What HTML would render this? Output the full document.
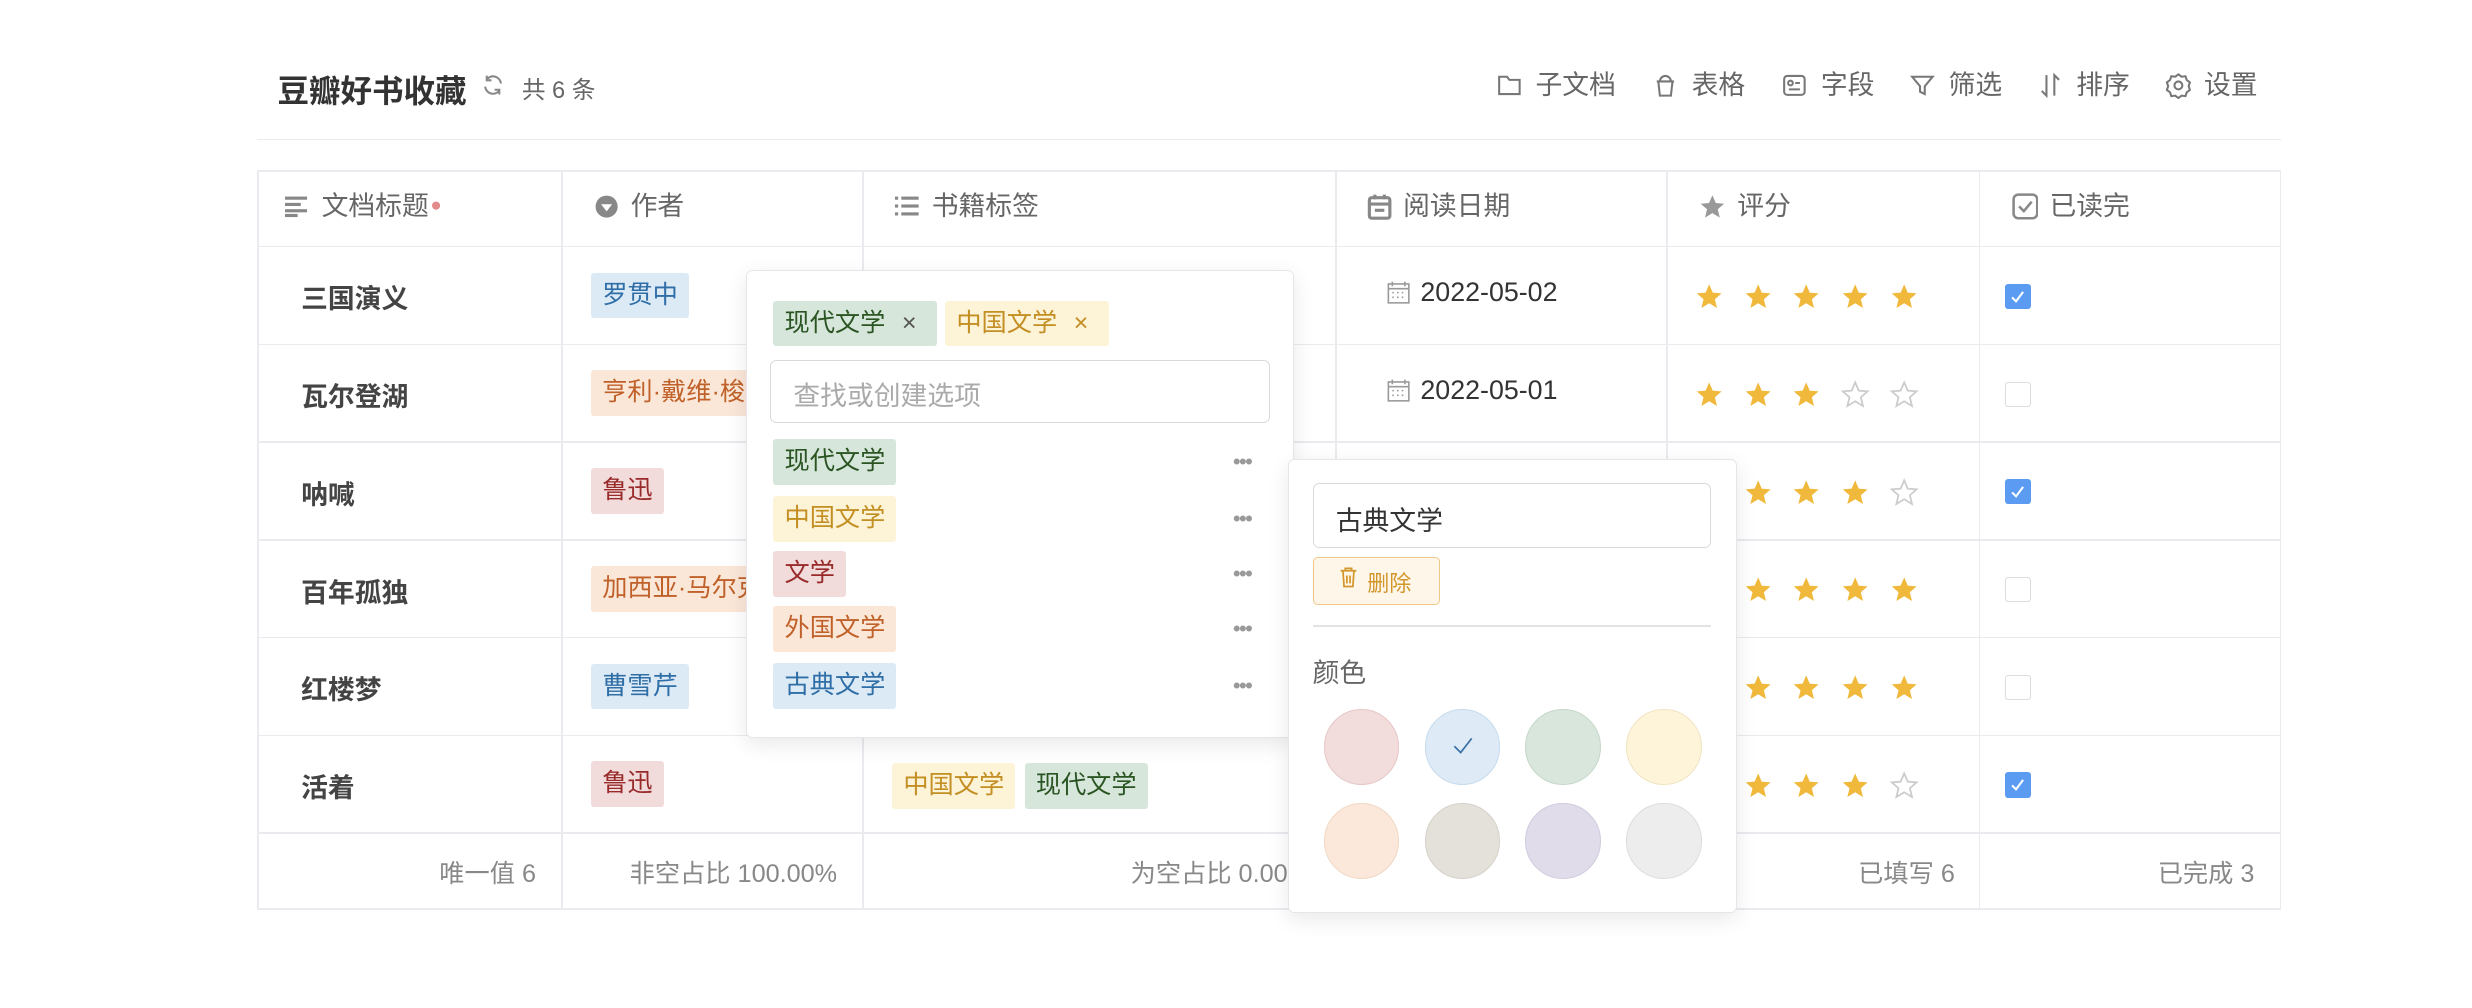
<!DOCTYPE html>
<html><head><meta charset="utf-8"><style>
*{box-sizing:border-box;margin:0;padding:0}
html,body{width:2472px;height:1008px;overflow:hidden;background:#fff}
#w{zoom:1.5765;position:relative;width:1568px;height:640px;font-family:"Liberation Sans","Noto Sans CJK SC",sans-serif;color:#333}
.a{position:absolute}
.tb{position:absolute;top:43px;font-size:17px;color:#666;display:flex;align-items:center;gap:8px;line-height:22px}
.tb svg{width:17px;height:17px}
.hl{position:absolute;left:163px;width:1284px;height:1px;background:#ebebef}
.vl{position:absolute;top:108px;height:468px;width:1px;background:#ebebef}
.hd{position:absolute;top:120px;font-size:17px;color:#666;display:flex;align-items:center;gap:7px;line-height:22px}
.t{position:absolute;font-size:17px;font-weight:bold;color:#444;left:191px}
.tag{position:absolute;height:29px;line-height:29px;padding:0 7px;font-size:16px;border-radius:2px;white-space:nowrap}
.bl{background:#dceaf6;color:#2f6ea6}.or{background:#fbe7d8;color:#c0612a}.rd{background:#f2dbdb;color:#982a2a}.gr{background:#d7e6da;color:#2a5523}.ye{background:#fdf3d7;color:#c38e22}
.dt{position:absolute;left:879px;font-size:17px;color:#333;display:flex;align-items:center;gap:6px}
.st{position:absolute;display:flex;gap:13px}
.st svg{width:18px;height:18px}
.cb{position:absolute;left:1272px;width:16px;height:16px;border-radius:2px}
.ck{background:#5b9cf2}
.uc{border:1px solid #ddd;background:#fff}
.ft{position:absolute;top:542px;font-size:16px;color:#888;text-align:right}
.pop{position:absolute;background:#fff;border:1px solid #e6e6ea;border-radius:4px;box-shadow:0 4px 14px rgba(0,0,0,.09)}
.dots{position:absolute;left:782px;font-size:14px;color:#999;letter-spacing:-1px}
.c{position:absolute;width:48px;height:48px;border-radius:50%}
</style></head><body><div id="w">
<div class="a" style="left:176px;top:42px;font-size:20px;font-weight:bold;color:#333">豆瓣好书收藏</div>
<svg class="a" style="left:306px;top:47px" width="14" height="14" viewBox="0 0 14 14" fill="none" stroke="#888" stroke-width="1.3"><path d="M12 6A5 5 0 0 0 3 3.5M2 8a5 5 0 0 0 9 2.5"/><path d="M3 1v3h3M11 13v-3H8"/></svg>
<div class="a" style="left:331px;top:45px;font-size:15px;color:#666">共 6 条</div>

<div class="tb" style="left:949px"><svg viewBox="0 0 17 17" fill="none" stroke="#777" stroke-width="1.3"><path d="M2 3h5l1.5 2H15v9H2z"/></svg>子文档</div>
<div class="tb" style="left:1048px"><svg viewBox="0 0 17 17" fill="none" stroke="#777" stroke-width="1.3"><path d="M4 6h9l-1 9H5zM3 6h11M5 6a3.5 3.5 0 0 1 7 0"/></svg>表格</div>
<div class="tb" style="left:1130px"><svg viewBox="0 0 17 17" fill="none" stroke="#777" stroke-width="1.3"><rect x="2" y="2.5" width="13" height="12" rx="2"/><circle cx="6" cy="7" r="1.5"/><path d="M5 11h7M9 7h3"/></svg>字段</div>
<div class="tb" style="left:1211px"><svg viewBox="0 0 17 17" fill="none" stroke="#777" stroke-width="1.3"><path d="M2 3h13l-5 6v5l-3-1.5V9z"/></svg>筛选</div>
<div class="tb" style="left:1292px"><svg viewBox="0 0 17 17" fill="none" stroke="#777" stroke-width="1.3"><path d="M6 2v13L3 12M11 15V2l3 3"/></svg>排序</div>
<div class="tb" style="left:1373px"><svg viewBox="0 0 17 17" fill="none" stroke="#777" stroke-width="1.3"><path d="M8.5 1.5l2 1.5 2.5-.3.8 2.4 2 1.5-.8 2.4.8 2.4-2 1.5-.8 2.4-2.5-.3-2 1.5-2-1.5-2.5.3-.8-2.4-2-1.5.8-2.4-.8-2.4 2-1.5.8-2.4 2.5.3z"/><circle cx="8.5" cy="8.5" r="2.5"/></svg>设置</div>

<div class="hl" style="top:88px"></div>
<div class="hl" style="top:108px"></div>
<div class="hl" style="top:156px"></div>
<div class="hl" style="top:218px"></div>
<div class="hl" style="top:280px"></div>
<div class="hl" style="top:342px"></div>
<div class="hl" style="top:404px"></div>
<div class="hl" style="top:466px"></div>
<div class="hl" style="top:528px"></div>
<div class="hl" style="top:576px"></div>
<div class="vl" style="left:163px"></div><div class="vl" style="left:356px"></div><div class="vl" style="left:547px"></div><div class="vl" style="left:847px"></div><div class="vl" style="left:1057px"></div><div class="vl" style="left:1255px"></div><div class="vl" style="left:1446px"></div>

<div class="hd" style="left:181px"><svg width="16" height="14" viewBox="0 0 16 14" fill="#888"><rect y="1" width="14" height="2"/><rect y="5" width="10" height="2"/><rect y="9" width="14" height="2"/><rect y="12" width="8" height="2"/></svg>文档标题<span style="color:#e38a8a;margin-left:-6px;font-size:12px">●</span></div>
<div class="hd" style="left:377px"><svg width="16" height="16" viewBox="0 0 16 16"><circle cx="8" cy="8" r="7" fill="#888"/><path d="M4.5 6.5h7L8 11z" fill="#fff"/></svg>作者</div>
<div class="hd" style="left:568px"><svg width="16" height="14" viewBox="0 0 16 14" fill="#888"><rect x="0" y="1" width="2" height="2"/><rect x="4" y="1" width="11" height="2"/><rect x="0" y="6" width="2" height="2"/><rect x="4" y="6" width="11" height="2"/><rect x="0" y="11" width="2" height="2"/><rect x="4" y="11" width="11" height="2"/></svg>书籍标签</div>
<div class="hd" style="left:867px"><svg width="16" height="17" viewBox="0 0 16 17" fill="none" stroke="#888" stroke-width="2"><rect x="1.5" y="3" width="13" height="13" rx="1.5"/><path d="M5 1v3M11 1v3M1.5 7h13M5 11h6"/></svg>阅读日期</div>
<div class="hd" style="left:1078px"><svg width="17" height="17" viewBox="0 0 24 24" fill="#999"><path d="M12 2l3 7 7.5.6-5.7 5 1.8 7.4L12 18l-6.6 4 1.8-7.4-5.7-5L9 9z"/></svg>评分</div>
<div class="hd" style="left:1276px"><svg width="17" height="17" viewBox="0 0 17 17" fill="none" stroke="#888" stroke-width="1.6"><rect x="1" y="1" width="15" height="15" rx="3"/><path d="M4.5 8.5l3 3 5-6"/></svg>已读完</div>

<div class="t" style="top:176px">三国演义</div>
<div class="t" style="top:238px">瓦尔登湖</div>
<div class="t" style="top:300px">呐喊</div>
<div class="t" style="top:362px">百年孤独</div>
<div class="t" style="top:424px">红楼梦</div>
<div class="t" style="top:486px">活着</div>

<div class="tag bl" style="left:375px;top:173px">罗贯中</div>
<div class="tag or" style="left:375px;top:235px">亨利·戴维·梭罗</div>
<div class="tag rd" style="left:375px;top:297px">鲁迅</div>
<div class="tag or" style="left:375px;top:359px">加西亚·马尔克斯</div>
<div class="tag bl" style="left:375px;top:421px">曹雪芹</div>
<div class="tag rd" style="left:375px;top:483px">鲁迅</div>
<div class="tag ye" style="left:566px;top:484px">中国文学</div>
<div class="tag gr" style="left:650px;top:484px">现代文学</div>

<svg width="0" height="0" style="position:absolute"><defs><path id="s" d="M12 2l3 7 7.5.6-5.7 5 1.8 7.4L12 18l-6.6 4 1.8-7.4-5.7-5L9 9z"/></defs></svg>
<div class="dt" style="top:176px"><svg width="16" height="16" viewBox="0 0 16 16" fill="none" stroke="#999"><rect x="1.5" y="2.5" width="13" height="12"/><path d="M1.5 5.5h13M4 1v3M12 1v3M4 8h1M7 8h1M10 8h1M4 11h1M7 11h1M10 11h1"/></svg>2022-05-02</div>
<div class="dt" style="top:238px"><svg width="16" height="16" viewBox="0 0 16 16" fill="none" stroke="#999"><rect x="1.5" y="2.5" width="13" height="12"/><path d="M1.5 5.5h13M4 1v3M12 1v3M4 8h1M7 8h1M10 8h1M4 11h1M7 11h1M10 11h1"/></svg>2022-05-01</div>

<div class="st" style="left:1075px;top:179px"><svg viewBox="0 0 24 24" fill="#f0b93b"><use href="#s"/></svg><svg viewBox="0 0 24 24" fill="#f0b93b"><use href="#s"/></svg><svg viewBox="0 0 24 24" fill="#f0b93b"><use href="#s"/></svg><svg viewBox="0 0 24 24" fill="#f0b93b"><use href="#s"/></svg><svg viewBox="0 0 24 24" fill="#f0b93b"><use href="#s"/></svg></div>
<div class="st" style="left:1075px;top:241px"><svg viewBox="0 0 24 24" fill="#f0b93b"><use href="#s"/></svg><svg viewBox="0 0 24 24" fill="#f0b93b"><use href="#s"/></svg><svg viewBox="0 0 24 24" fill="#f0b93b"><use href="#s"/></svg><svg viewBox="0 0 24 24" fill="none" stroke="#ccc" stroke-width="1.5"><use href="#s"/></svg><svg viewBox="0 0 24 24" fill="none" stroke="#ccc" stroke-width="1.5"><use href="#s"/></svg></div>
<div class="st" style="left:1075px;top:303px"><svg viewBox="0 0 24 24" fill="#f0b93b"><use href="#s"/></svg><svg viewBox="0 0 24 24" fill="#f0b93b"><use href="#s"/></svg><svg viewBox="0 0 24 24" fill="#f0b93b"><use href="#s"/></svg><svg viewBox="0 0 24 24" fill="#f0b93b"><use href="#s"/></svg><svg viewBox="0 0 24 24" fill="none" stroke="#ccc" stroke-width="1.5"><use href="#s"/></svg></div>
<div class="st" style="left:1075px;top:365px"><svg viewBox="0 0 24 24" fill="#f0b93b"><use href="#s"/></svg><svg viewBox="0 0 24 24" fill="#f0b93b"><use href="#s"/></svg><svg viewBox="0 0 24 24" fill="#f0b93b"><use href="#s"/></svg><svg viewBox="0 0 24 24" fill="#f0b93b"><use href="#s"/></svg><svg viewBox="0 0 24 24" fill="#f0b93b"><use href="#s"/></svg></div>
<div class="st" style="left:1075px;top:427px"><svg viewBox="0 0 24 24" fill="#f0b93b"><use href="#s"/></svg><svg viewBox="0 0 24 24" fill="#f0b93b"><use href="#s"/></svg><svg viewBox="0 0 24 24" fill="#f0b93b"><use href="#s"/></svg><svg viewBox="0 0 24 24" fill="#f0b93b"><use href="#s"/></svg><svg viewBox="0 0 24 24" fill="#f0b93b"><use href="#s"/></svg></div>
<div class="st" style="left:1075px;top:489px"><svg viewBox="0 0 24 24" fill="#f0b93b"><use href="#s"/></svg><svg viewBox="0 0 24 24" fill="#f0b93b"><use href="#s"/></svg><svg viewBox="0 0 24 24" fill="#f0b93b"><use href="#s"/></svg><svg viewBox="0 0 24 24" fill="#f0b93b"><use href="#s"/></svg><svg viewBox="0 0 24 24" fill="none" stroke="#ccc" stroke-width="1.5"><use href="#s"/></svg></div>

<div class="cb ck" style="top:180px"><svg width="16" height="16" viewBox="0 0 16 16" fill="none" stroke="#fff" stroke-width="1.3"><path d="M4.5 8.5l2.5 2.5 4.5-6"/></svg></div>
<div class="cb uc" style="top:242px"></div>
<div class="cb ck" style="top:304px"><svg width="16" height="16" viewBox="0 0 16 16" fill="none" stroke="#fff" stroke-width="1.3"><path d="M4.5 8.5l2.5 2.5 4.5-6"/></svg></div>
<div class="cb uc" style="top:366px"></div>
<div class="cb uc" style="top:428px"></div>
<div class="cb ck" style="top:490px"><svg width="16" height="16" viewBox="0 0 16 16" fill="none" stroke="#fff" stroke-width="1.3"><path d="M4.5 8.5l2.5 2.5 4.5-6"/></svg></div>

<div class="ft" style="right:1228px">唯一值 6</div>
<div class="ft" style="right:1037px">非空占比 100.00%</div>
<div class="ft" style="right:737px">为空占比 0.00%</div>
<div class="ft" style="right:328px">已填写 6</div>
<div class="ft" style="right:138px">已完成 3</div>

<div class="pop" style="left:473px;top:171px;width:348px;height:297px">
 <div class="tag gr" style="left:17px;top:19px;width:104px">现代文学 <span style="margin-left:6px;color:#555">×</span></div>
 <div class="tag ye" style="left:126px;top:19px;width:104px">中国文学 <span style="margin-left:6px">×</span></div>
 <div class="a" style="left:15px;top:57px;width:317px;height:40px;border:1px solid #d9d9de;border-radius:4px;font-size:17px;color:#aaa;padding:8px 14px">查找或创建选项</div>
 <div class="tag gr" style="left:17px;top:107px">现代文学</div>
 <div class="tag ye" style="left:17px;top:143px">中国文学</div>
 <div class="tag rd" style="left:17px;top:178px">文学</div>
 <div class="tag or" style="left:17px;top:213px">外国文学</div>
 <div class="tag bl" style="left:17px;top:249px">古典文学</div>
</div>
<div class="dots" style="top:285px">•••</div>
<div class="dots" style="top:321px">•••</div>
<div class="dots" style="top:356px">•••</div>
<div class="dots" style="top:391px">•••</div>
<div class="dots" style="top:427px">•••</div>

<div class="pop" style="left:817px;top:291px;width:285px;height:288px">
 <div class="a" style="left:15px;top:15px;width:253px;height:41px;border:1px solid #d9d9de;border-radius:4px;font-size:17px;color:#333;padding:9px 14px">古典文学</div>
 <div class="a" style="left:15px;top:62px;width:81px;height:30px;border:1px solid #f0c98a;background:#fdf6e9;border-radius:3px;font-size:14px;color:#d3962a;padding:5px 0 0 16px;display:flex;gap:6px;align-items:flex-start"><svg width="12" height="14" viewBox="0 0 12 14" fill="none" stroke="#d3962a" stroke-width="1.1"><path d="M1 3h10M4 3V1.5h4V3M2.5 3l.7 10h5.6l.7-10M5 6v5M7 6v5"/></svg>删除</div>
 <div class="a" style="left:15px;top:105px;width:253px;height:1px;background:#e3e3e6"></div>
 <div class="a" style="left:15px;top:121px;font-size:17px;color:#666">颜色</div>
 <div class="c" style="left:22px;top:158px;background:#f2dcdc;border:1px solid #e6c7c7"></div>
 <div class="c" style="left:86px;top:158px;background:#deebf6;border:1px solid #c5dbee"><svg width="46" height="46" viewBox="0 0 46 46" fill="none" stroke="#3b6fa5" stroke-width="1.1"><path d="M18 23l4 4 7-9"/></svg></div>
 <div class="c" style="left:150px;top:158px;background:#d8e6db;border:1px solid #c5d7c8"></div>
 <div class="c" style="left:214px;top:158px;background:#fdf4da;border:1px solid #f0e3c0"></div>
 <div class="c" style="left:22px;top:218px;background:#fbe8da;border:1px solid #f0d8c5"></div>
 <div class="c" style="left:86px;top:218px;background:#e4e1da;border:1px solid #d5d2ca"></div>
 <div class="c" style="left:150px;top:218px;background:#e0dcea;border:1px solid #d0cbdf"></div>
 <div class="c" style="left:214px;top:218px;background:#ecedec;border:1px solid #dcdddc"></div>
</div>
</div></body></html>
